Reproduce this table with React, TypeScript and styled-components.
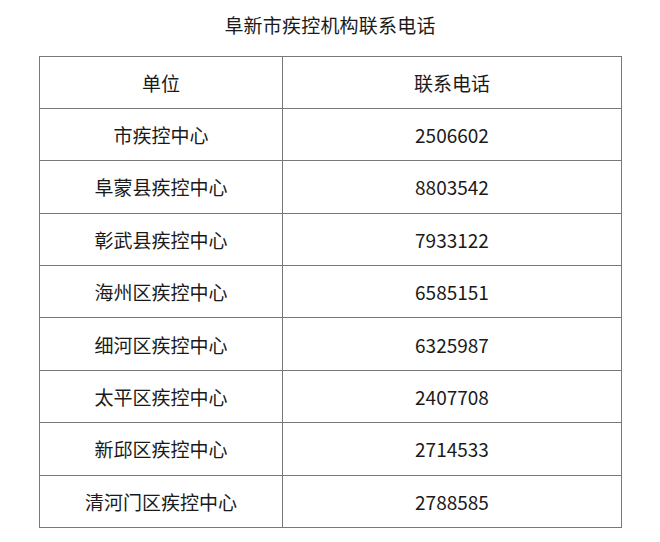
import styled, { createGlobalStyle } from "styled-components";

const GlobalStyle = createGlobalStyle`
	html, body {
		margin: 0;
		padding: 0;
		background: #fff;
	}
	body {
		font-family: "Noto Sans CJK SC", "Noto Sans", sans-serif;
		color: #1a1a1a;
	}
`;

const Page = styled.div`
	width: 660px;
	height: 542px;
	display: flex;
	flex-direction: column;
	align-items: flex-start;
`;

const Title = styled.h1`
	margin: 0;
	width: 100%;
	height: 50px;
	line-height: 50px;
	text-align: center;
	font-size: 19px;
	font-weight: 400;
	letter-spacing: 0.2px;
`;

const Table = styled.table`
	margin: 5.5px 0 0 39px;
	width: 581px;
	border-collapse: collapse;
	table-layout: fixed;
`;

const Cell = styled.td<{ $wide?: boolean }>`
	width: ${(p) => (p.$wide ? "338px" : "242px")};
	height: 51.4px;
	padding: 0;
	border: 1.5px solid #787878;
	text-align: center;
	vertical-align: middle;
	font-size: 19px;
	line-height: 1;
`;

const HeadCell = styled(Cell).attrs({ as: "th" })`
	font-weight: 400;
`;

const rows: [string, string][] = [
	["市疾控中心", "2506602"],
	["阜蒙县疾控中心", "8803542"],
	["彰武县疾控中心", "7933122"],
	["海州区疾控中心", "6585151"],
	["细河区疾控中心", "6325987"],
	["太平区疾控中心", "2407708"],
	["新邱区疾控中心", "2714533"],
	["清河门区疾控中心", "2788585"],
];

export default function App() {
	return (
		<>
			<GlobalStyle />
			<Page>
				<Title>阜新市疾控机构联系电话</Title>
				<Table>
					<thead>
						<tr>
							<HeadCell>单位</HeadCell>
							<HeadCell $wide>联系电话</HeadCell>
						</tr>
					</thead>
					<tbody>
						{rows.map(([name, phone]) => (
							<tr key={name}>
								<Cell>{name}</Cell>
								<Cell $wide>{phone}</Cell>
							</tr>
						))}
					</tbody>
				</Table>
			</Page>
		</>
	);
}
